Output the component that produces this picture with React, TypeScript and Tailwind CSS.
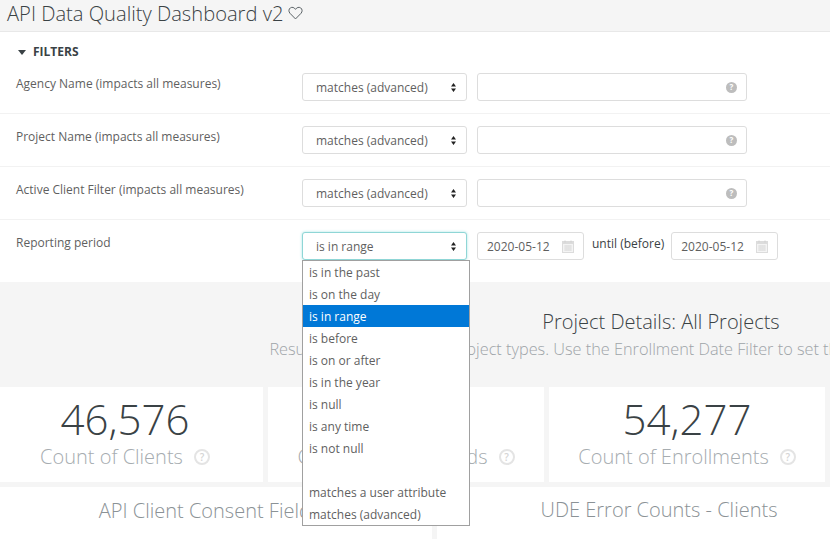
const font = { fontFamily: '"Open Sans", sans-serif' };

const SelectArrow = () => (
  <svg width="5" height="9" viewBox="0 0 5 9" className="shrink-0">
    <path d="M2.5 0 L5 3.6 L0 3.6 Z M2.5 9 L0 5.4 L5 5.4 Z" fill="#222" />
  </svg>
);

const FakeSelect = ({ value, focus }: { value: string; focus?: boolean }) => (
  <div
    className={`flex h-[28px] w-[165px] shrink-0 items-center justify-between rounded-[3px] border bg-white pl-[13px] pr-[10px] text-[12px] text-[#5f5f5f] ${
      focus ? 'border-[#8fd6d6] shadow-[0_0_3px_#a8e4e4]' : 'border-[#dddddd]'
    }`}
  >
    <span className="pt-[1px]">{value}</span>
    <SelectArrow />
  </div>
);

const HelpDot = () => (
  <div className="flex h-[11px] w-[11px] items-center justify-center rounded-full bg-[#bdbdbd] text-[8px] font-bold leading-none text-white">
    ?
  </div>
);

const FakeInput = () => (
  <div className="flex h-[28px] w-[270px] items-center justify-end rounded-[3px] border border-[#dddddd] bg-white pr-[9px]">
    <HelpDot />
  </div>
);

const CalendarIcon = () => (
  <svg width="12" height="13" viewBox="0 0 12 13" className="shrink-0">
    <rect x="0.5" y="1.5" width="11" height="11" fill="#f4f4f4" stroke="#dcdcdc" />
    <rect x="1" y="2" width="10" height="2" fill="#dcdcdc" />
    <path d="M3 0.5 V2.5 M9 0.5 V2.5" stroke="#d0d0d0" />
    <path d="M2 6 H10 M2 8 H10 M2 10 H10 M4 5 V11 M6 5 V11 M8 5 V11" stroke="#dadada" strokeWidth="0.8" />
  </svg>
);

const DateBox = () => (
  <div className="flex h-[28px] w-[107px] shrink-0 items-center justify-between rounded-[3px] border border-[#dddddd] bg-white pl-[9px] pr-[9px] text-[12px] text-[#5f5f5f]">
    <span className="pt-[1px]">2020-05-12</span>
    <CalendarIcon />
  </div>
);

const FilterRow = ({ label }: { label: string }) => (
  <div className="flex h-[53px] items-start border-b border-[#f2f2f2] pl-[16px] pt-[12px]">
    <div className="w-[286px] shrink-0 pt-[2px] text-[12px] leading-[18px] text-[#5f5f5f]">{label}</div>
    <FakeSelect value="matches (advanced)" />
    <div className="ml-[10px]">
      <FakeInput />
    </div>
  </div>
);

const OutlineHelp = () => (
  <span className="ml-[11px] inline-flex h-[16px] w-[16px] items-center justify-center rounded-full border-2 border-[#e4e4e4] text-[10px] font-semibold leading-none text-[#d4d4d4]">
    ?
  </span>
);

const StatCard = ({ value, label }: { value: string; label: string }) => (
  <div className="flex h-[95px] w-[276px] shrink-0 flex-col items-center bg-white pt-[5px]">
    <div className="h-[51px] text-[42px] font-light leading-[54px] text-[#3a4245]">{value}</div>
    <div className="flex items-center text-[20px] font-light leading-[27px] text-[#a6acb0]">
      {label}
      <OutlineHelp />
    </div>
  </div>
);

const options = [
  'is in the past',
  'is on the day',
  'is in range',
  'is before',
  'is on or after',
  'is in the year',
  'is null',
  'is any time',
  'is not null',
  '',
  'matches a user attribute',
  'matches (advanced)',
];

export default function App() {
  return (
    <div className="relative h-[539px] w-[830px] overflow-hidden bg-white" style={font}>
      {/* titulo */}
      <div className="flex h-[32px] items-center border-b border-[#e8e8e8] bg-[#f5f5f5] pb-[5px] pl-[7px]">
        <span className="text-[20.15px] font-light leading-[27px] text-[#3a4245]">API Data Quality Dashboard v2</span>
        <svg width="15" height="14" viewBox="0 0 24 22" className="ml-[5px]" fill="none" stroke="#5a6266" strokeWidth="1.6">
          <path d="M12 20.5 L3.2 11.5 C0.6 8.7 1 4.6 3.8 2.8 C6.6 1 10 2 12 5.2 C14 2 17.4 1 20.2 2.8 C23 4.6 23.4 8.7 20.8 11.5 Z" />
        </svg>
      </div>

      {/* filtros */}
      <div className="h-[250px]">
        <div className="flex h-[29px] items-center pl-[18px] pt-[11px]">
          <svg width="8" height="5" viewBox="0 0 8 5">
            <path d="M0 0 H8 L4 5 Z" fill="#3a4245" />
          </svg>
          <span className="ml-[7px] text-[12px] font-bold text-[#3a4245]">FILTERS</span>
        </div>
        <FilterRow label="Agency Name (impacts all measures)" />
        <FilterRow label="Project Name (impacts all measures)" />
        <FilterRow label="Active Client Filter (impacts all measures)" />
        <div className="flex items-start pl-[16px] pt-[12px]">
          <div className="w-[286px] shrink-0 pt-[2px] text-[12px] leading-[18px] text-[#5f5f5f]">Reporting period</div>
          <FakeSelect value="is in range" focus />
          <div className="ml-[10px] flex items-center">
            <DateBox />
            <span className="ml-[8px] mr-[7px] pb-[4px] text-[12px] text-[#3a4245]">until (before)</span>
            <DateBox />
          </div>
        </div>
      </div>

      {/* dashboard */}
      <div className="ml-[-13px] h-[257px] w-[1348px] bg-[#f5f5f5]">
        <div className="flex h-[105px] flex-col items-center pt-[26px]">
          <div className="text-[20px] font-light leading-[27px] text-[#3a4245]">Project Details: All Projects</div>
          <div className="mt-[3px] whitespace-nowrap text-[16.3px] font-light leading-[22px] text-[#9ea4a8]">
            Results include all of the project types. Use the Enrollment Date Filter to set the reporting period of this tab.
          </div>
        </div>
        <div className="flex gap-[5px]">
          <StatCard value="46,576" label="Count of Clients" />
          <StatCard value="51,008" label="Count of Households" />
          <StatCard value="54,277" label="Count of Enrollments" />
        </div>
        <div className="mt-[5px] flex gap-[5px]">
          <div className="h-[60px] w-[445px] bg-white pt-[10px] text-center text-[20px] font-light leading-[27px] text-[#8b9296]">
            API Client Consent Fields
          </div>
          <div className="h-[60px] w-[444px] bg-white pt-[9px] text-center text-[20px] font-light leading-[27px] text-[#8b9296]">
            UDE Error Counts - Clients
          </div>
        </div>
      </div>

      {/* menu aberto do select */}
      <div className="absolute left-[302px] top-[260px] w-[168px] border border-[#a0a0a0] bg-white">
        {options.map((o, i) => (
          <div
            key={i}
            className={`h-[22px] pl-[6px] pt-[1px] text-[12px] leading-[22px] ${
              o === 'is in range' ? 'bg-[#0078d7] text-white' : 'text-[#5f5f5f]'
            }`}
          >
            {o}
          </div>
        ))}
      </div>
    </div>
  );
}
